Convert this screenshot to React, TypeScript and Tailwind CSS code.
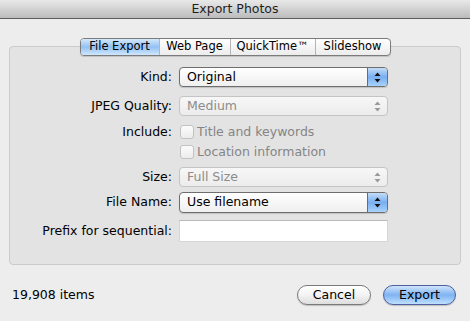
import React from "react";

const font = { fontFamily: '"DejaVu Sans", "Liberation Sans", sans-serif' };

const Arrows = ({ active }: { active: boolean }) => (
  <svg width="7" height="11" viewBox="0 0 7 11" className="block">
    <path d="M3.5 0.5 L6.5 4 L0.5 4 Z" fill={active ? "#111" : "#9a9a9a"} />
    <path d="M3.5 10.5 L6.5 7 L0.5 7 Z" fill={active ? "#111" : "#9a9a9a"} />
  </svg>
);

const Popup = ({ value, active = false }: { value: string; active?: boolean }) => (
  <div
    className={`flex h-full w-[209px] items-stretch overflow-hidden rounded-[4px] border ${
      active
        ? "border-[#6e6e6e] bg-gradient-to-b from-white to-[#efefef] shadow-[0_1px_1px_rgba(0,0,0,0.15)]"
        : "border-[#c4c4c4] bg-gradient-to-b from-[#f7f7f7] to-[#ececec]"
    }`}
  >
    <div
      className={`flex flex-1 items-center pl-[7px] text-[12.5px] ${
        active ? "text-black" : "text-[#8c8c8c]"
      }`}
    >
      {value}
    </div>
    <div
      className={`flex w-[20px] items-center justify-center ${
        active
          ? "border-l border-[#5b6aa0] bg-gradient-to-b from-[#c4dcf7] via-[#79aef0] to-[#a9d2fb]"
          : "border-l border-transparent"
      }`}
    >
      <Arrows active={active} />
    </div>
  </div>
);

const Checkbox = ({ label }: { label: string }) => (
  <div className="flex h-[14px] items-center">
    <div className="ml-[1px] h-[14px] w-[14px] rounded-[3px] border border-[#c2c2c2] bg-gradient-to-b from-[#fbfbfb] to-[#ececec]" />
    <span className="ml-[3px] text-[12.5px] text-[#858585]">{label}</span>
  </div>
);

const Label = ({ children }: { children: React.ReactNode }) => (
  <div className="w-[169px] shrink-0 pr-[7px] text-right text-[12.5px] text-black">{children}</div>
);

export default function App() {
  const tabs = ["File Export", "Web Page", "QuickTime™", "Slideshow"];
  const tabWidths = ["w-[78px]", "w-[71px]", "w-[85px]", "w-[75px]"];

  return (
    <div className="flex h-[321px] w-[470px] flex-col bg-[#ededed]" style={font}>
      {/* title bar */}
      <div className="flex h-[19px] items-center justify-center border-b border-[#5e5e5e] bg-gradient-to-b from-[#e9e9e9] to-[#bcbcbc] text-[12.5px] text-[#1e1e1e]">
        Export Photos
      </div>

      {/* tabs */}
      <div className="relative z-10 mt-[19px] flex justify-center">
        <div className="flex h-[18px] overflow-hidden rounded-[4px] border border-[#7b7b7b] bg-gradient-to-b from-white to-[#ececec] shadow-[0_1px_1px_rgba(0,0,0,0.15)]">
          {tabs.map((t, i) => (
            <div
              key={t}
              className={`flex items-center justify-center text-[11.5px] text-black ${tabWidths[i]} ${
                i > 0 ? "border-l border-[#b5b5b5]" : ""
              } ${i === 0 ? "bg-gradient-to-b from-[#d6e8fb] via-[#93c1f3] to-[#cfe7fd]" : ""}`}
            >
              {t}
            </div>
          ))}
        </div>
      </div>

      {/* group box */}
      <div className="mx-[9px] -mt-[10px] flex h-[219px] flex-col rounded-[4px] border border-[#cbcbcb] bg-[#e3e3e3] pt-[20px]">
        <div className="flex h-[20px] items-center">
          <Label>Kind:</Label>
          <Popup value="Original" active />
        </div>
        <div className="mt-[9px] flex h-[20px] items-center">
          <Label>JPEG Quality:</Label>
          <Popup value="Medium" />
        </div>
        <div className="mt-[9px] flex h-[14px] items-center">
          <Label>Include:</Label>
          <Checkbox label="Title and keywords" />
        </div>
        <div className="mt-[6px] flex h-[14px] items-center">
          <div className="w-[169px] shrink-0" />
          <Checkbox label="Location information" />
        </div>
        <div className="mt-[8px] flex h-[20px] items-center">
          <Label>Size:</Label>
          <Popup value="Full Size" />
        </div>
        <div className="mt-[5px] flex h-[21px] items-center">
          <Label>File Name:</Label>
          <Popup value="Use filename" active />
        </div>
        <div className="mt-[7px] flex h-[22px] items-center">
          <Label>Prefix for sequential:</Label>
          <div className="h-full w-[209px] border border-[#d6d6d6] border-t-[#b9b9b9] bg-white" />
        </div>
      </div>

      {/* footer */}
      <div className="mt-[20px] flex h-[20px] items-center pl-[12px] pr-[14px]">
        <span className="flex-1 text-[12.5px] text-black">19,908 items</span>
        <button className="flex h-[20px] w-[74px] items-center justify-center rounded-full border border-[#7a7a7a] bg-gradient-to-b from-white via-[#f3f3f3] to-[#dedede] text-[12.5px] text-black shadow-[0_1px_1px_rgba(0,0,0,0.2)]">
          Cancel
        </button>
        <button className="ml-[12px] flex h-[20px] w-[73px] items-center justify-center rounded-full border border-[#4c5fa0] bg-gradient-to-b from-[#cfe4fb] via-[#7fb3f1] to-[#bfe0fd] text-[12.5px] text-black shadow-[0_1px_1px_rgba(0,0,0,0.2)]">
          Export
        </button>
      </div>
    </div>
  );
}
